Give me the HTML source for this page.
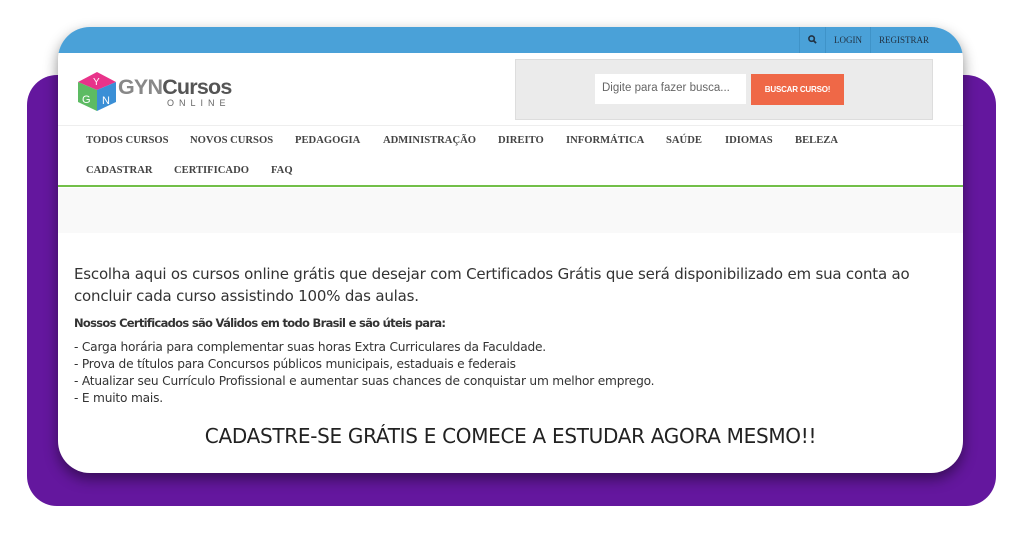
<!DOCTYPE html>
<html><head><meta charset="utf-8"><style>
*{margin:0;padding:0;box-sizing:border-box}
body{width:1024px;height:536px;background:#fff;position:relative;overflow:hidden;font-family:"Liberation Sans",sans-serif}
.purple{position:absolute;left:27px;top:75px;width:969px;height:431px;background:#64179e;border-radius:30px}
.card{position:absolute;left:58px;top:27px;width:905px;height:446px;background:#fff;border-radius:32px;overflow:hidden;box-shadow:0 6px 14px rgba(0,0,0,.45)}
.top{height:26px;background:#4aa1d8;position:relative}
.top .r{position:absolute;right:26px;top:0;height:26px;display:flex;font-family:"Liberation Serif",serif;font-size:9px;color:#234}
.top .r div{padding:0 8px;line-height:26px;border-left:1px solid #3f93c8}
.logo{position:absolute;left:17px;top:45px}
.sbox{position:absolute;left:457px;top:32px;width:418px;height:61px;background:#ebebeb;border:1px solid #ddd}
.inp{position:absolute;left:79px;top:14px;width:151px;height:30px;background:#fff;font-family:"Liberation Sans",sans-serif;font-size:11.5px;color:#666;padding:8px 7px}
.btn{position:absolute;left:235px;top:14px;width:93px;height:31px;background:#ef6847;color:#fff;font-size:8px;font-weight:bold;text-align:center;line-height:31px;letter-spacing:-.2px}
.nav{position:absolute;left:0;top:98px;width:905px;height:62px;border-top:1px solid #eee;border-bottom:2px solid #72bf49;font-family:"Liberation Serif",serif;font-weight:bold;font-size:10.6px;color:#444}
.nav span{position:absolute}
.gray{position:absolute;left:0;top:161px;width:905px;height:45px;background:#f9f9f9}
.txt{position:absolute;left:16px;top:236px;font-family:"DejaVu Sans",sans-serif;color:#333;width:880px}
.p1{font-size:15px;line-height:22px;letter-spacing:-.2px}
.p2{font-size:11.5px;font-weight:bold;margin-top:9px;letter-spacing:-.7px}
.p3{font-size:12.2px;line-height:17px;margin-top:9px;letter-spacing:-.2px}
.cta{position:absolute;left:0;width:905px;top:397px;text-align:center;font-family:"DejaVu Sans",sans-serif;font-size:20px;color:#222;letter-spacing:-.3px}
</style></head><body>
<div class="purple"></div>
<div class="card">
<div class="top"><div class="r"><div><svg width="9" height="9" viewBox="0 0 10 10" style="vertical-align:-1px"><circle cx="4" cy="4" r="3" fill="none" stroke="#234" stroke-width="1.8"/><line x1="6.2" y1="6.2" x2="9" y2="9" stroke="#234" stroke-width="2"/></svg></div><div>LOGIN</div><div>REGISTRAR</div></div></div>
<div class="logo">
<svg width="170" height="40" viewBox="0 0 170 40">
<polygon points="3,10 22,0 41,10 22,18" fill="#e8338a"/>
<polygon points="3,10 22,18 22,39 3,30" fill="#5dbb63"/>
<polygon points="22,18 41,10 41,30 22,39" fill="#3a8fd6"/>
<text x="18" y="13" font-size="10" fill="#fff" font-family="Liberation Sans">Y</text>
<text x="7" y="31" font-size="11" fill="#fff" font-family="Liberation Sans">G</text>
<text x="27" y="32" font-size="11" fill="#fff" font-family="Liberation Sans">N</text>
<text x="43" y="22" font-size="21.5" fill="#888" font-family="Liberation Sans" font-weight="bold" letter-spacing="-.8">GYN<tspan fill="#555">Cursos</tspan></text>
<text x="92" y="34" font-size="9" fill="#666" font-family="Liberation Sans" letter-spacing="5">ONLINE</text>
</svg></div>
<div class="sbox"><div class="inp">Digite para fazer busca...</div><div class="btn">BUSCAR CURSO!</div></div>
<div class="nav">
<span style="left:28px;top:9px">TODOS CURSOS</span>
<span style="left:132px;top:9px">NOVOS CURSOS</span>
<span style="left:237px;top:9px">PEDAGOGIA</span>
<span style="left:325px;top:9px">ADMINISTRAÇÃO</span>
<span style="left:440px;top:9px">DIREITO</span>
<span style="left:508px;top:9px">INFORMÁTICA</span>
<span style="left:608px;top:9px">SAÚDE</span>
<span style="left:667px;top:9px">IDIOMAS</span>
<span style="left:737px;top:9px">BELEZA</span>
<span style="left:28px;top:39px">CADASTRAR</span>
<span style="left:116px;top:39px">CERTIFICADO</span>
<span style="left:213px;top:39px">FAQ</span>
</div>
<div class="gray"></div>
<div class="txt">
<div class="p1">Escolha aqui os cursos online grátis que desejar com Certificados Grátis que será disponibilizado em sua conta ao concluir cada curso assistindo 100% das aulas.</div>
<div class="p2">Nossos Certificados são Válidos em todo Brasil e são úteis para:</div>
<div class="p3">- Carga horária para complementar suas horas Extra Curriculares da Faculdade.<br>- Prova de títulos para Concursos públicos municipais, estaduais e federais<br>- Atualizar seu Currículo Profissional e aumentar suas chances de conquistar um melhor emprego.<br>- E muito mais.</div>
</div>
<div class="cta">CADASTRE-SE GRÁTIS E COMECE A ESTUDAR AGORA MESMO!!</div>
</div>
</body></html>
